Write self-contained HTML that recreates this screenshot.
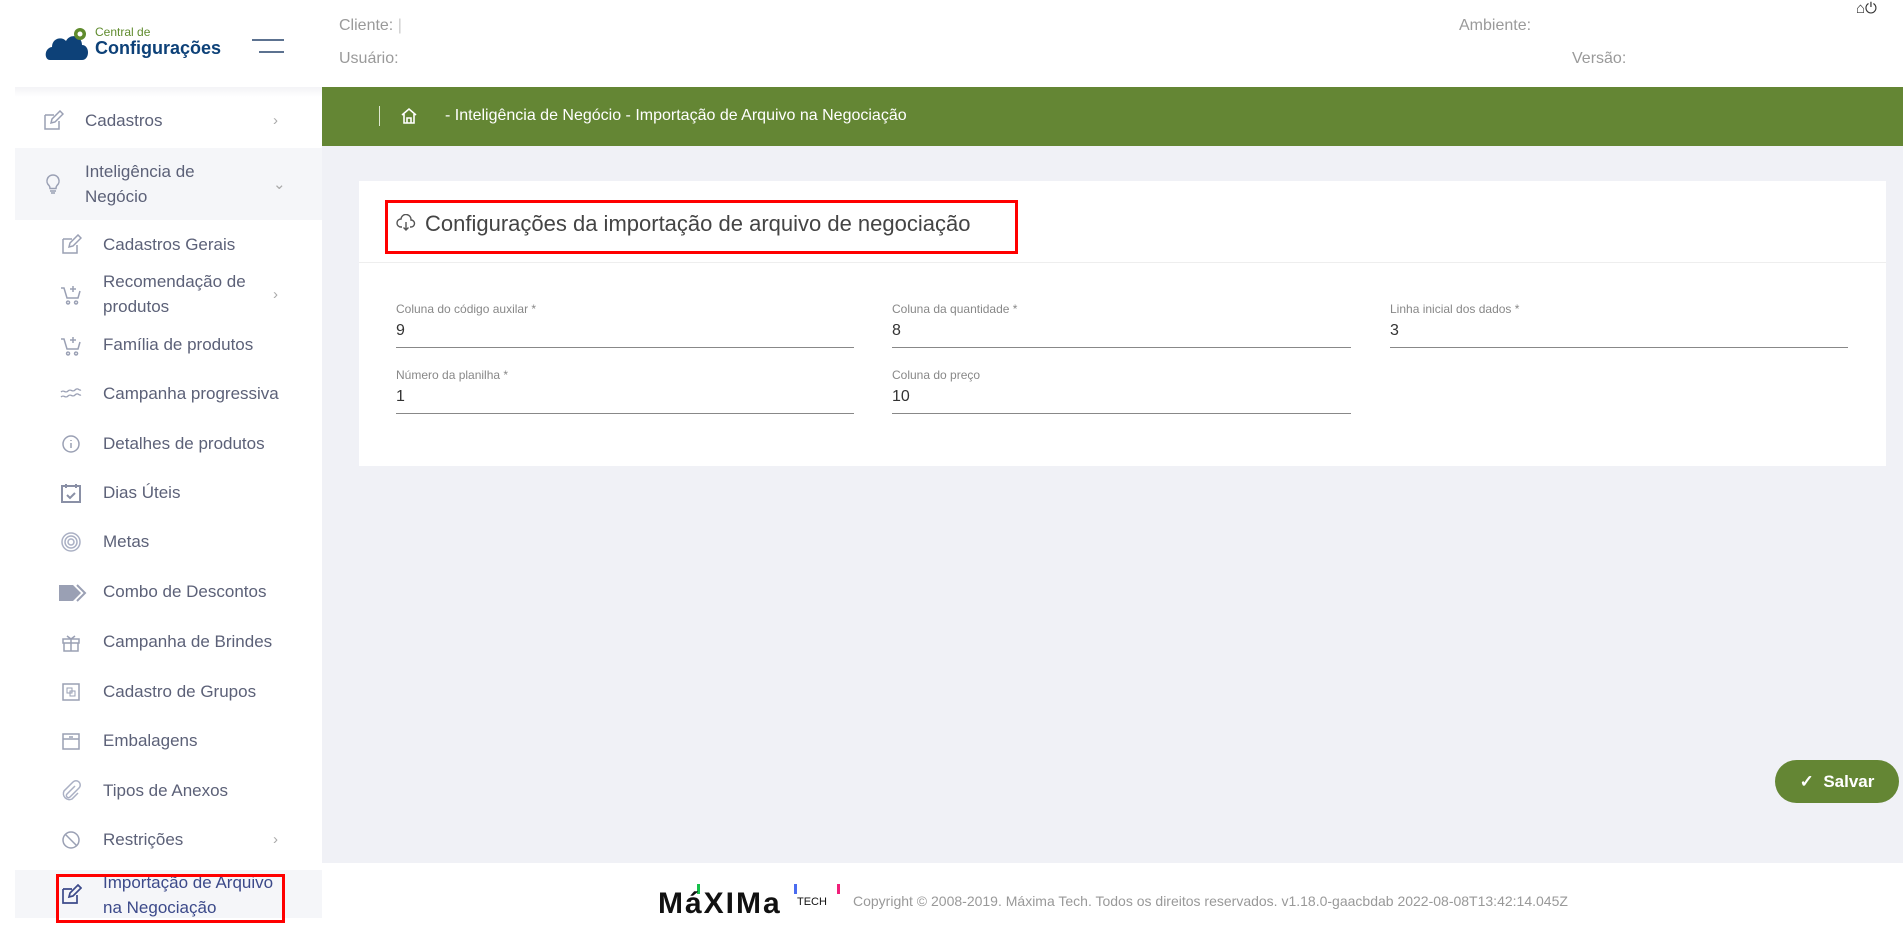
<!DOCTYPE html>
<html><head><meta charset="utf-8"><style>
*{box-sizing:border-box;margin:0;padding:0}
body{width:1903px;height:939px;overflow:hidden;background:#f0f1f6;font-family:"Liberation Sans",sans-serif;position:relative}
.abs{position:absolute}
.hdr{left:0;top:0;width:1903px;height:87px;background:#fff}
.ht{color:#9a9a9a;font-size:16px}
.side{left:0;top:87px;width:322px;height:852px;background:#fff}
.mi{position:absolute;left:15px;width:307px;color:#5c6178;font-size:17px;display:flex;align-items:center}
.mi .ic{position:absolute;left:27px;width:22px;height:22px}
.mi .tx{position:absolute;left:70px;line-height:25px}
.sub .tx{left:88px}
.sub .ic{left:45px}
.mi .chev{position:absolute;left:258px;color:#aaa;font-size:15px}
.green{left:322px;top:87px;width:1581px;height:59px;background:#648634;color:#fff;font-size:16px}
.card{left:359px;top:181px;width:1527px;height:285px;background:#fff}
.lbl{color:#888;font-size:12px;position:absolute}
.val{color:#333;font-size:16px;position:absolute}
.ul{position:absolute;height:1px;background:#888}
.footer{left:0;top:863px;width:1903px;height:76px;background:#fff}
</style></head><body>
<div class="abs hdr"></div>
<div class="abs footer"></div>
<svg class="abs" style="left:44px;top:24px" width="46" height="38" viewBox="0 0 46 38">
<path d="M6 36 C0 36 0 24 8 23 C8 14 18 12 22 17 C26 9 38 11 38 21 C46 21 46 36 38 36 Z" fill="#0d4178"/>
<circle cx="36" cy="10" r="6" fill="#5f8b2d"/><circle cx="36" cy="10" r="2.5" fill="#fff"/>
</svg>
<div class="abs" style="left:95px;top:25px;color:#5f8b2d;font-size:12px">Central de</div>
<div class="abs" style="left:95px;top:38px;color:#0d4178;font-size:18px;font-weight:bold">Configurações</div>
<div class="abs" style="left:252px;top:39px;width:32px;height:2px;background:#5c7290"></div>
<div class="abs" style="left:259px;top:51px;width:25px;height:2px;background:#5c7290"></div>
<div class="abs ht" style="left:339px;top:17px">Cliente: <span style="color:#ccc">|</span></div>
<div class="abs ht" style="left:339px;top:50px">Usuário:</div>
<div class="abs ht" style="left:1459px;top:17px">Ambiente:</div>
<div class="abs ht" style="left:1572px;top:50px">Versão:</div>
<div class="abs" style="left:1856px;top:0px;font-size:15px;color:#333">⌂⏻</div>

<div class="abs side"></div>
<div class="abs" style="left:15px;top:87px;width:307px;height:10px;background:linear-gradient(#f3f3f6,#fff)"></div>
<div class="mi" style="top:108px;height:25px"><svg class="ic" viewBox="0 0 22 22"><path d="M3 5h9M3 5v14h14v-8M9 13l1-4 8-8 3 3-8 8z" fill="none" stroke="#9aa0b4" stroke-width="1.5"/></svg><span class="tx">Cadastros</span><span class="chev">›</span></div>
<div class="abs" style="left:15px;top:148px;width:307px;height:72px;background:#f5f6f9"></div>
<div class="mi" style="top:159px;height:50px"><svg class="ic" viewBox="0 0 22 22"><path d="M11 2a6 6 0 0 0-4 10.5c1 1 1 2 1 3h6c0-1 0-2 1-3A6 6 0 0 0 11 2zM8 18h6M9 20h4" fill="none" stroke="#9aa0b4" stroke-width="1.5"/></svg><span class="tx">Inteligência de<br>Negócio</span><span class="chev">⌄</span></div>
<div class="mi sub" style="top:232px;height:25px"><svg class="ic" viewBox="0 0 22 22"><path d="M3 5h9M3 5v14h14v-8M9 13l1-4 8-8 3 3-8 8z" fill="none" stroke="#9aa0b4" stroke-width="1.5"/></svg><span class="tx">Cadastros Gerais</span></div>
<div class="mi sub" style="top:269px;height:50px"><svg class="ic" viewBox="0 0 22 22"><path d="M1 5h3l3 10h11l2-7M8 18a1.5 1.5 0 1 0 .1 0M16 18a1.5 1.5 0 1 0 .1 0M13 3v6M10 6h6" fill="none" stroke="#9aa0b4" stroke-width="1.5"/></svg><span class="tx">Recomendação de<br>produtos</span><span class="chev">›</span></div>
<div class="mi sub" style="top:332px;height:25px"><svg class="ic" viewBox="0 0 22 22"><path d="M1 5h3l3 10h11l2-7M8 18a1.5 1.5 0 1 0 .1 0M16 18a1.5 1.5 0 1 0 .1 0M13 3v6M10 6h6" fill="none" stroke="#9aa0b4" stroke-width="1.5"/></svg><span class="tx">Família de produtos</span></div>
<div class="mi sub" style="top:381px;height:25px"><svg class="ic" viewBox="0 0 22 22"><path d="M1 9c3-3 4 2 7-1s4 2 7-1 4 1 6 0M1 14c3-3 4 2 7-1s4 2 7-1 4 1 6 0" fill="none" stroke="#9aa0b4" stroke-width="1.3"/></svg><span class="tx">Campanha progressiva</span></div>
<div class="mi sub" style="top:431px;height:25px"><svg class="ic" viewBox="0 0 22 22"><circle cx="11" cy="11" r="8" fill="none" stroke="#9aa0b4" stroke-width="1.5"/><path d="M11 10v5M11 7v1" stroke="#9aa0b4" stroke-width="1.5"/></svg><span class="tx">Detalhes de produtos</span></div>
<div class="mi sub" style="top:480px;height:25px"><svg class="ic" viewBox="0 0 22 22"><rect x="2" y="4" width="18" height="16" fill="none" stroke="#8a90a6" stroke-width="2"/><path d="M6 2v4M16 2v4M7 13l3 3 5-5" fill="none" stroke="#8a90a6" stroke-width="2"/></svg><span class="tx">Dias Úteis</span></div>
<div class="mi sub" style="top:529px;height:25px"><svg class="ic" viewBox="0 0 22 22"><circle cx="11" cy="11" r="9" fill="none" stroke="#aab0c4" stroke-width="1.5"/><circle cx="11" cy="11" r="6" fill="none" stroke="#aab0c4" stroke-width="1.5"/><circle cx="11" cy="11" r="3" fill="none" stroke="#aab0c4" stroke-width="1.5"/></svg><span class="tx">Metas</span></div>
<div class="mi sub" style="top:579px;height:25px"><svg class="ic" style="width:30px;left:43px" viewBox="0 0 30 22"><path d="M1 4h14l8 8-8 8H1z" fill="#9aa0b4"/><path d="M19 4l8 8-8 8" fill="none" stroke="#9aa0b4" stroke-width="2"/></svg><span class="tx">Combo de Descontos</span></div>
<div class="mi sub" style="top:629px;height:25px"><svg class="ic" viewBox="0 0 22 22"><path d="M3 8h16v4H3zM4 12v8h14v-8M11 8v12M7 5l4 3 4-3" fill="none" stroke="#9aa0b4" stroke-width="1.5"/></svg><span class="tx">Campanha de Brindes</span></div>
<div class="mi sub" style="top:679px;height:25px"><svg class="ic" viewBox="0 0 22 22"><rect x="3" y="3" width="16" height="16" fill="none" stroke="#9aa0b4" stroke-width="1.5"/><rect x="7" y="7" width="5" height="5" fill="none" stroke="#9aa0b4"/><rect x="10" y="10" width="5" height="5" fill="none" stroke="#9aa0b4"/></svg><span class="tx">Cadastro de Grupos</span></div>
<div class="mi sub" style="top:728px;height:25px"><svg class="ic" viewBox="0 0 22 22"><rect x="3" y="4" width="16" height="15" fill="none" stroke="#9aa0b4" stroke-width="1.5"/><path d="M3 9h16M9 7h4" stroke="#9aa0b4" stroke-width="1.5"/></svg><span class="tx">Embalagens</span></div>
<div class="mi sub" style="top:778px;height:25px"><svg class="ic" viewBox="0 0 22 22"><path d="M15 6l-8 8a2 2 0 0 0 3 3l9-9a4 4 0 0 0-6-6L4 11a6 6 0 0 0 8 8l6-6" fill="none" stroke="#aab0c4" stroke-width="1.5"/></svg><span class="tx">Tipos de Anexos</span></div>
<div class="mi sub" style="top:827px;height:25px"><svg class="ic" viewBox="0 0 22 22"><circle cx="11" cy="11" r="8" fill="none" stroke="#9aa0b4" stroke-width="1.5"/><path d="M5 5l12 12" stroke="#9aa0b4" stroke-width="1.5"/></svg><span class="tx">Restrições</span><span class="chev">›</span></div>
<div class="abs" style="left:15px;top:870px;width:307px;height:48px;background:#f5f6f9"></div>
<div class="mi sub" style="top:871px;height:48px;color:#3c4a8a"><svg class="ic" viewBox="0 0 22 22"><path d="M3 5h9M3 5v14h14v-8M9 13l1-4 8-8 3 3-8 8z" fill="none" stroke="#3c4a8a" stroke-width="1.7"/></svg><span class="tx">Importação de Arquivo<br>na Negociação</span></div>
<div class="abs" style="left:56px;top:874px;width:229px;height:49px;border:3px solid #f00"></div>

<div class="abs green"></div>
<div class="abs" style="left:379px;top:106px;width:1px;height:20px;background:#dfe8d0"></div>
<svg class="abs" style="left:400px;top:107px" width="18" height="18" viewBox="0 0 18 18"><path d="M2 8L9 2l7 6M4 7v9h10V7M7 16v-5h4v5" fill="none" stroke="#fff" stroke-width="1.6"/></svg>
<div class="abs" style="left:445px;top:107px;color:#fff;font-size:16px">- Inteligência de Negócio - Importação de Arquivo na Negociação</div>

<div class="abs card"></div>
<div class="abs" style="left:359px;top:262px;width:1527px;height:1px;background:#eee"></div>
<svg class="abs" style="left:396px;top:214px" width="20" height="18" viewBox="0 0 20 18"><path d="M6 13H5a4 4 0 0 1 0-8 5 5 0 0 1 10 1 3.5 3.5 0 0 1 0 7h-1M10 8v8M7.5 13.5L10 16l2.5-2.5" fill="none" stroke="#555" stroke-width="1.4"/></svg>
<div class="abs" style="left:425px;top:211px;color:#444;font-size:22px">Configurações da importação de arquivo de negociação</div>
<div class="abs" style="left:385px;top:200px;width:633px;height:54px;border:3px solid #f00"></div>

<div class="lbl" style="left:396px;top:302px">Coluna do código auxilar *</div>
<div class="val" style="left:396px;top:322px">9</div><div class="ul" style="left:396px;top:347px;width:458px"></div>
<div class="lbl" style="left:892px;top:302px">Coluna da quantidade *</div>
<div class="val" style="left:892px;top:322px">8</div><div class="ul" style="left:892px;top:347px;width:459px"></div>
<div class="lbl" style="left:1390px;top:302px">Linha inicial dos dados *</div>
<div class="val" style="left:1390px;top:322px">3</div><div class="ul" style="left:1390px;top:347px;width:458px"></div>
<div class="lbl" style="left:396px;top:368px">Número da planilha *</div>
<div class="val" style="left:396px;top:388px">1</div><div class="ul" style="left:396px;top:413px;width:458px"></div>
<div class="lbl" style="left:892px;top:368px">Coluna do preço</div>
<div class="val" style="left:892px;top:388px">10</div><div class="ul" style="left:892px;top:413px;width:459px"></div>

<div class="abs" style="left:1775px;top:760px;width:124px;height:43px;border-radius:22px;background:#648634;color:#fff;font-size:17px;font-weight:bold;display:flex;align-items:center;justify-content:center">✓&nbsp; Salvar</div>

<div class="abs" style="left:697px;top:884px;width:3px;height:10px;background:#16c04a"></div>
<div class="abs" style="left:794px;top:884px;width:3px;height:10px;background:#4a6cf0"></div>
<div class="abs" style="left:837px;top:884px;width:3px;height:10px;background:#f0207a"></div>
<div class="abs" style="left:658px;top:889px;font-size:30px;font-weight:bold;color:#111;letter-spacing:2px;line-height:30px">MáXIMa</div>
<div class="abs" style="left:797px;top:896px;font-size:11px;color:#111">TECH</div>
<div class="abs" style="left:853px;top:893px;font-size:14px;color:#999">Copyright © 2008-2019. Máxima Tech. Todos os direitos reservados. v1.18.0-gaacbdab 2022-08-08T13:42:14.045Z</div>
</body></html>
